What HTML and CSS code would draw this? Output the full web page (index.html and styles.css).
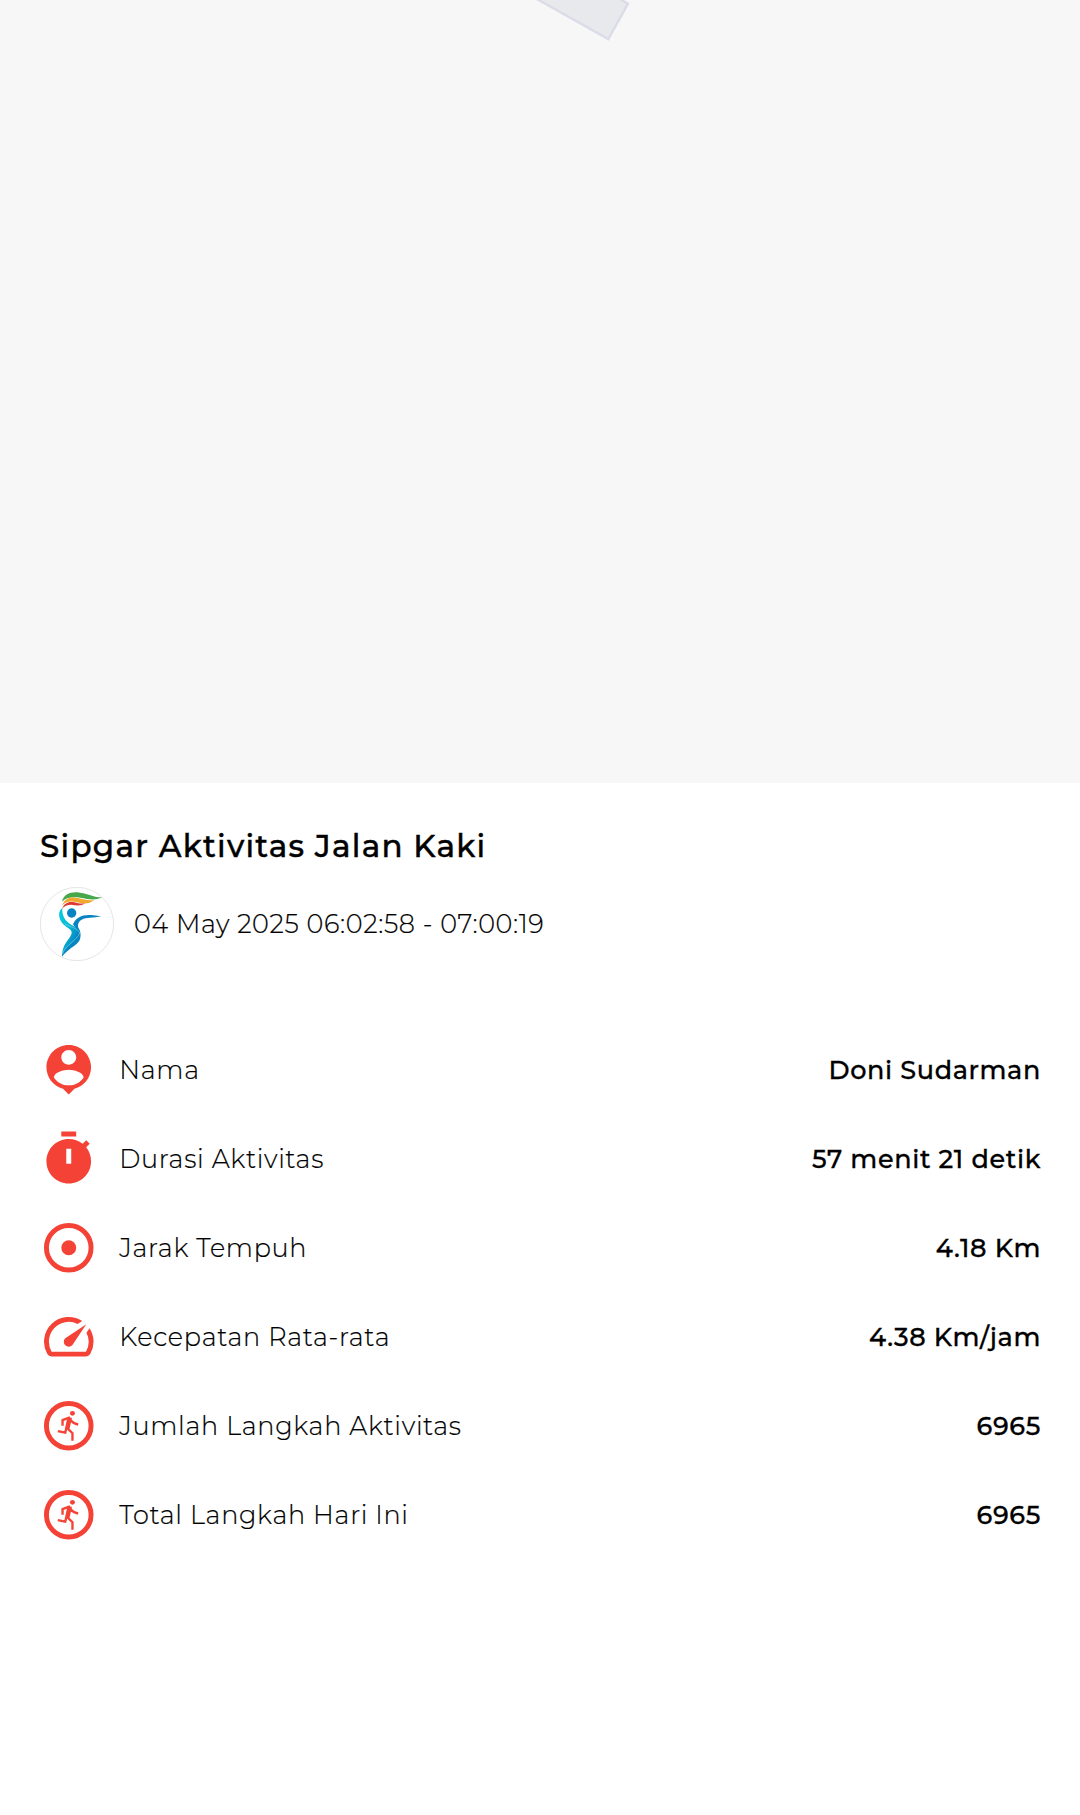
FILE: index.html
```html
<!DOCTYPE html>
<html lang="id">
<head>
<meta charset="UTF-8">
<meta name="viewport" content="width=device-width, initial-scale=1.0">
<title>Sipgar Aktivitas Jalan Kaki</title>
<link rel="stylesheet" href="styles.css">
</head>
<body>
<div class="map">
<svg class="map-shape" width="1080" height="783" viewBox="0 0 1080 783">
<path d="M503-20L608.3 39 628 3.7 586-20z" fill="#e7e9ec" stroke="#dbdce8" stroke-width="2.4"/>
</svg>
</div>

<div class="content">
<h1>Sipgar Aktivitas Jalan Kaki</h1>
<div class="activity">
<svg class="avatar" viewBox="30 21 222 222">
<defs>
<linearGradient id="body" x1="0" y1="0" x2="1" y2="1">
<stop offset="0" stop-color="#08cbdc"/>
<stop offset="0.4" stop-color="#05bcd6"/>
<stop offset="0.75" stop-color="#0783bf"/>
</linearGradient>
</defs>
<circle cx="141" cy="132" r="110" fill="#fff" stroke="#d5d8da" stroke-width="2"/>
<path d="M96 65C101 42 123 34 150 38C178 42 190 52 216 52C194 63 174 57 151 53C125 50 107 53 96 65z" fill="#46a84b"/>
<path d="M96 77C104 54 122 49 143 54C161 58 173 62 193 60C175 75 154 70 139 66C119 62 106 65 96 77z" fill="#f2a72e"/>
<path d="M96 86C103 69 116 63 133 67C145 70 153 72 166 70C151 80 136 76 124 74C112 74 103 78 96 86z" fill="#dd3832"/>
<circle cx="125" cy="99" r="14" fill="#0784c1"/>
<path d="M97 84C84 92 85 114 96 128C108 143 126 147 125 158C124 175 97 187 96 229C113 201 151 181 150 157C148 139 119 138 106 119C98 107 96 96 97 84z" fill="url(#body)"/>
<path d="M129 133C137 113 156 103 184 105L214 109C190 115 169 112 155 119C144 125 142 137 146 145C152 154 154 168 149 180C142 196 108 210 96 231C97 211 125 194 140 174C153 155 139 147 129 133z" fill="#0784c1"/>
<path d="M104 131C115 139 143 143 149 159C146 177 101 199 98 222" fill="none" stroke="#bfe7f3" stroke-width="1.4"/>
</svg>
<span class="time">04 May 2025 06:02:58 - 07:00:19</span>
</div>

<ul class="stats">
<li>
<svg class="icon" viewBox="0 0 24 24"><path d="M12 2c-4.97 0-9 4.03-9 9 0 4.17 2.84 7.67 6.69 8.69L12 22l2.31-2.31C18.16 18.67 21 15.17 21 11c0-4.97-4.03-9-9-9zm0 2c1.66 0 3 1.34 3 3s-1.34 3-3 3-3-1.34-3-3 1.34-3 3-3zm0 14.3c-2.5 0-4.71-1.28-6-3.22.03-1.99 4-3.08 6-3.08 1.99 0 5.97 1.09 6 3.08-1.29 1.94-3.5 3.22-6 3.22z"/></svg>
<span class="label">Nama</span>
<span class="value">Doni Sudarman</span>
</li>
<li>
<svg class="icon" viewBox="0 0 24 24"><path fill-rule="evenodd" d="M15 1H9v2h6V1zm-4 13h2V8h-2v6zm8.03-6.61l1.42-1.42c-.43-.51-.9-.99-1.41-1.41l-1.42 1.42C16.07 4.74 14.12 4 12 4c-4.97 0-9 4.03-9 9s4.02 9 9 9 9-4.03 9-9c0-2.12-.74-4.07-1.97-5.61z"/></svg>
<span class="label">Durasi Aktivitas</span>
<span class="value">57 menit 21 detik</span>
</li>
<li>
<svg class="icon" viewBox="0 0 24 24"><circle class="ring" cx="12" cy="12" r="9"/><circle cx="12" cy="12" r="3"/></svg>
<span class="label">Jarak Tempuh</span>
<span class="value">4.18 Km</span>
</li>
<li>
<svg class="icon" viewBox="0 0 24 24"><path d="M20.38 8.57l-1.23 1.85a8 8 0 0 1-.22 7.58H5.07A8 8 0 0 1 15.58 6.85l1.85-1.23A10 10 0 0 0 3.35 19a2 2 0 0 0 1.72 1h13.85a2 2 0 0 0 1.74-1 10 10 0 0 0-.27-10.44zm-9.79 6.84a2 2 0 0 0 2.83 0l5.66-8.49-8.49 5.66a2 2 0 0 0 0 2.83z"/></svg>
<span class="label">Kecepatan Rata-rata</span>
<span class="value">4.38 Km/jam</span>
</li>
<li>
<svg class="icon" viewBox="0 0 24 24"><circle class="ring" cx="12" cy="12" r="9"/><circle cx="13.5" cy="7" r="1"/><path class="runner" d="M9.5 12V9.7l2.6-1 .9 1.3c.7.9 1.6 1.3 2.8 1.5M7.6 14.2l3 .6 1.2-5.6h.9l-.9 4.2 1.7 1.6V18"/></svg>
<span class="label">Jumlah Langkah Aktivitas</span>
<span class="value">6965</span>
</li>
<li>
<svg class="icon" viewBox="0 0 24 24"><circle class="ring" cx="12" cy="12" r="9"/><circle cx="13.5" cy="7" r="1"/><path class="runner" d="M9.5 12V9.7l2.6-1 .9 1.3c.7.9 1.6 1.3 2.8 1.5M7.6 14.2l3 .6 1.2-5.6h.9l-.9 4.2 1.7 1.6V18"/></svg>
<span class="label">Total Langkah Hari Ini</span>
<span class="value">6965</span>
</li>
</ul>
</div>
</body>
</html>
```
FILE: styles.css
```css
* {
box-sizing: border-box;
}
body {
margin: 0;
min-height: 1815px;
background-color: #fff;
color: #000;
font-family: Montserrat, Inter, sans-serif;
}
.map {
height: 783px;
background-color: #f7f7f7;
overflow: hidden;
}
.map-shape {
display: block;
}
.content {
padding: 43px 40px 0;
}
h1 {
margin: 0;
font-size: 31px;
font-weight: 500;
line-height: 40px;
letter-spacing: 1.24px;
white-space: nowrap;
-webkit-text-stroke: 0.4px #000;
}
.activity {
display: flex;
align-items: center;
gap: 20px;
height: 74px;
margin-top: 21px;
}
.avatar {
width: 74px;
height: 74px;
}
.time {
font-size: 25.5px;
font-weight: 300;
letter-spacing: 0.64px;
margin-top: -1px;
-webkit-text-stroke: 0.2px #000;
}
.stats {
list-style: none;
margin: 64px -1px 0 -0.6px;
padding: 0;
}
.stats li {
display: flex;
align-items: center;
height: 89px;
}
.icon {
width: 59.5px;
height: 59.5px;
margin-top: 1px;
margin-right: 20.4px;
fill: #f44336;
}
.ring {
fill: none;
stroke: #f44336;
stroke-width: 2;
}
.runner {
fill: none;
stroke: #f44336;
stroke-width: 0.95;
}
.label {
flex: 1;
font-size: 25.5px;
font-weight: 300;
letter-spacing: 0.7px;
-webkit-text-stroke: 0.2px #000;
}
.value {
font-size: 25.5px;
font-weight: 500;
letter-spacing: 0.64px;
-webkit-text-stroke: 0.3px #000;
}
```
